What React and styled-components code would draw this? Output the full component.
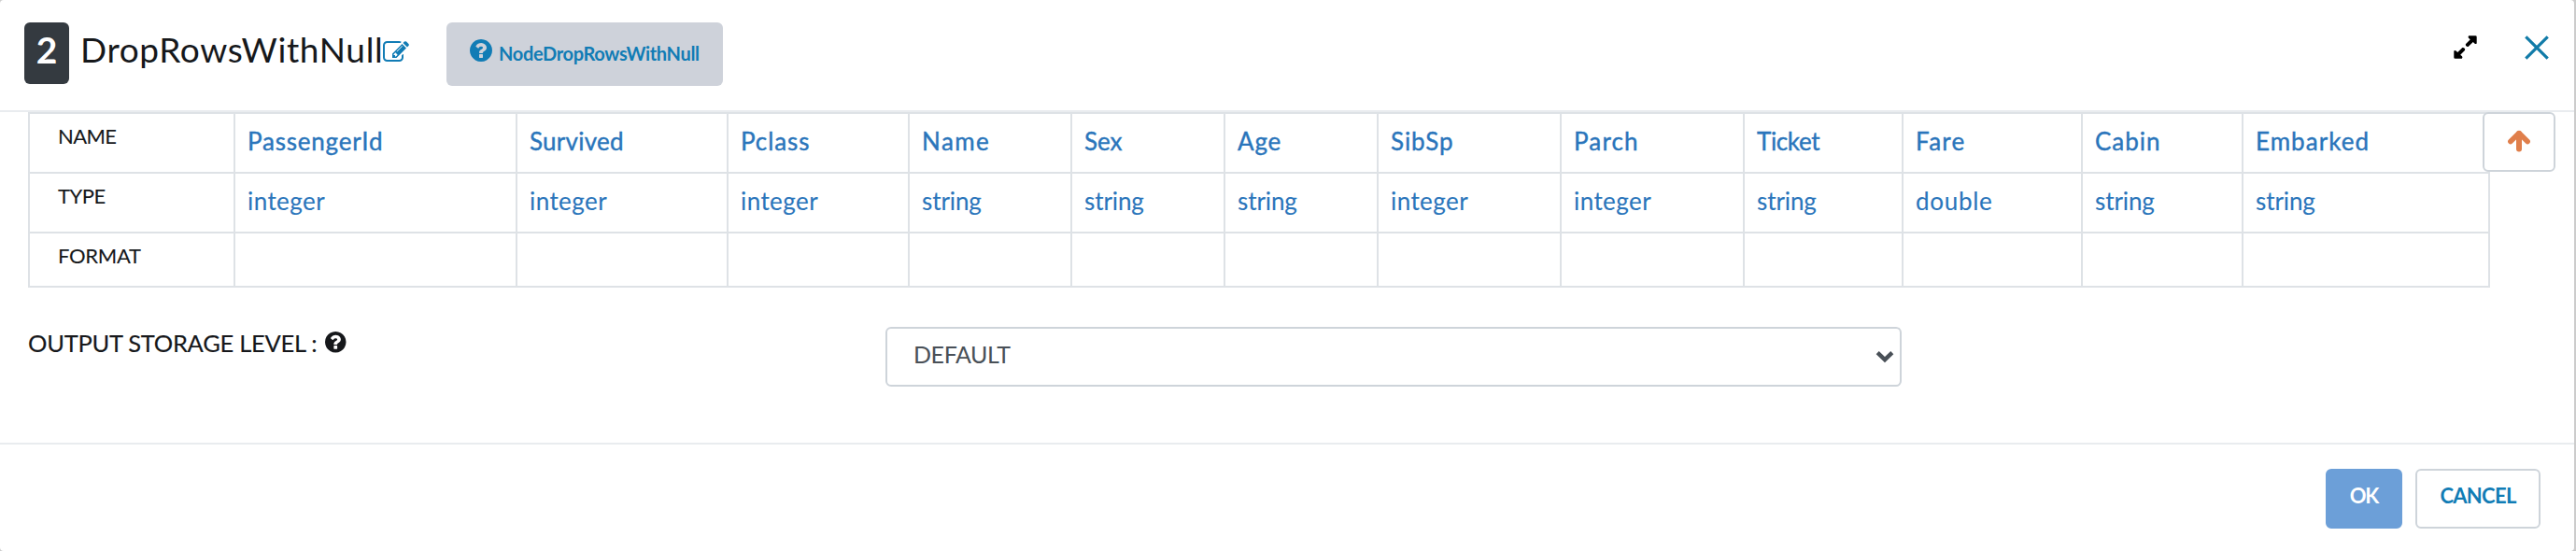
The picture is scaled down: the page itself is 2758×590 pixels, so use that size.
import React from "react";
import styled, { createGlobalStyle } from "styled-components";

const GlobalStyle = createGlobalStyle`
  * { box-sizing: border-box; }
  body {
    margin: 0;
    background: #cccccc;
    color: #16181b;
    font-family: Lato, "Liberation Sans", sans-serif;
  }
  svg { display: block; }
`;

const Modal = styled.div`
  display: flex;
  flex-direction: column;
  height: 590px;
  margin-right: 2px;
  background: #fff;
  border-radius: 4px;
`;

const Header = styled.header`
  display: flex;
  align-items: flex-start;
  height: 120px;
  padding: 24px 27px 0 26px;
  border-bottom: 2px solid #e9ecef;
`;

const StepBadge = styled.span`
  width: 48px;
  height: 66px;
  border-radius: 6px;
  background: #343a40;
  color: #fff;
  font-size: 39px;
  font-weight: 700;
  line-height: 58px;
  text-align: center;
`;

const Title = styled.h1`
  width: 324px;
  margin: 0 0 0 12px;
  font-size: 37px;
  font-weight: 400;
  line-height: 58px;
  letter-spacing: 0.64px;
  white-space: nowrap;
`;

const EditButton = styled.a`
  margin-top: 18px;
  color: #117cb5;
`;

const HelpLink = styled.a`
  display: flex;
  align-items: flex-start;
  width: 296px;
  height: 68px;
  margin-left: 40px;
  padding: 18px 0 0 25px;
  border-radius: 6px;
  background: #ced2da;
  color: #117cb5;
  font-size: 20px;
  font-weight: 700;
  line-height: 30px;
  letter-spacing: -0.33px;
  white-space: nowrap;

  span { margin-left: 7px; }
`;

const HeaderActions = styled.div`
  display: flex;
  gap: 51px;
  margin: 14px 0 0 auto;
`;

const Schema = styled.section`
  display: flex;
  align-items: flex-start;
  padding-left: 30px;
`;

const Table = styled.div`
  display: grid;
  grid-template-columns: 220px 302px 226px 194px 174px 164px 164px 196px 196px 170px 192px 172px 266px;
  grid-template-rows: 64px 64px 60px;
`;

const Cell = styled.div`
  padding: 13px 0 0 13px;
  border: 0 solid #dee2e6;
  border-top-width: 2px;
  border-left-width: 2px;
  border-right-width: ${(p) => (p.$last ? "2px" : 0)};
  border-bottom-width: ${(p) => (p.$bottom ? "2px" : 0)};
  color: #2a75bb;
  font-size: 26px;
  line-height: 32px;
  letter-spacing: ${(p) => p.$track || 0}px;
  -webkit-text-stroke: ${(p) => (p.$strong ? "0.4px" : "0.1px")} currentColor;
  white-space: nowrap;
`;

const LabelCell = styled(Cell)`
  padding: 11px 0 0 30px;
  color: #16181b;
  font-size: 22px;
  line-height: 26px;
`;

const CollapseButton = styled.button`
  display: flex;
  justify-content: center;
  width: 78px;
  height: 64px;
  margin-left: -8px;
  padding: 17px 0 0;
  border: 2px solid #ced4da;
  border-radius: 6px;
  background: #fff;
`;

const Field = styled.section`
  display: flex;
  align-items: flex-start;
  height: 166px;
  padding: 42px 0 0 30px;
`;

const FieldLabel = styled.label`
  display: flex;
  width: 918px;
  font-size: 25.5px;
  line-height: 34px;
  letter-spacing: -0.27px;
  white-space: nowrap;
  -webkit-text-stroke: 0.15px currentColor;

  svg { margin: 5px 0 0 9px; }
`;

const Select = styled.div`
  display: flex;
  justify-content: space-between;
  width: 1088px;
  height: 64px;
  padding: 12px 6px 0 28px;
  border: 2px solid #ced4da;
  border-radius: 6px;
  color: #495057;
  font-size: 25px;
  line-height: 30px;
  letter-spacing: -0.4px;

  svg { margin-top: 11px; }
`;

const Footer = styled.footer`
  display: flex;
  flex: 1;
  align-items: flex-start;
  justify-content: flex-end;
  gap: 14px;
  padding: 26px 36px 0 0;
  border-top: 2px solid #e9ecef;
`;

const Button = styled.button`
  width: ${(p) => (p.$primary ? 82 : 134)}px;
  height: 64px;
  padding: 0 0 7px;
  border: 2px solid ${(p) => (p.$primary ? "#6c9fd8" : "#ced4da")};
  border-radius: 6px;
  background: ${(p) => (p.$primary ? "#6c9fd8" : "#fff")};
  color: ${(p) => (p.$primary ? "#fff" : "#117cb5")};
  font: 700 22px/26px Lato, "Liberation Sans", sans-serif;
  letter-spacing: ${(p) => (p.$primary ? -1.2 : -0.7)}px;
`;

const columns = [
  { name: "PassengerId", track: 0.79, type: "integer" },
  { name: "Survived", track: 0.24, type: "integer" },
  { name: "Pclass", track: 0.92, type: "integer" },
  { name: "Name", track: 1.43, type: "string" },
  { name: "Sex", track: 0, type: "string" },
  { name: "Age", track: 0.8, type: "string" },
  { name: "SibSp", track: 0.93, type: "integer" },
  { name: "Parch", track: 1.15, type: "integer" },
  { name: "Ticket", track: -0.38, type: "string" },
  { name: "Fare", track: 1.27, type: "double" },
  { name: "Cabin", track: 1, type: "string" },
  { name: "Embarked", track: 1.04, type: "string" },
];

const typeTrack = { integer: 0.43, string: -0.1, double: 0.7 };

const QuestionCircle = ({ size }) => (
  <svg width={size} height={size} viewBox="128 128 1536 1536" fill="currentColor">
    <path d="M1024 1376v-192q0-14-9-23t-23-9h-192q-14 0-23 9t-9 23v192q0 14 9 23t23 9h192q14 0 23-9t9-23zm256-672q0-88-55.5-163t-138.5-116-170-41q-243 0-371 213-15 24 8 42l132 100q7 6 19 6 16 0 25-12 53-68 86-92 34-24 86-24 48 0 85.5 26t37.5 59q0 38-20 61t-68 45q-63 28-115.5 86.5t-52.5 125.5v36q0 14 9 23t23 9h192q14 0 23-9t9-23q0-19 21.5-49.5t54.5-49.5q32-18 49-28.5t46-35 44.5-48 28-60.5 12.5-81zm384 192q0 209-103 385.5t-279.5 279.5-385.5 103-385.5-103-279.5-279.5-103-385.5 103-385.5 279.5-279.5 385.5-103 385.5 103 279.5 279.5 103 385.5z" />
  </svg>
);

const EditIcon = () => (
  <svg width="28" height="28" viewBox="0 0 1792 1792" fill="currentColor">
    <path d="M888 1184l116-116-152-152-116 116v56h96v96h56zm440-720q-16-16-33 1l-350 350q-17 17-1 33t33-1l350-350q17-17 1-33zm80 594v190q0 119-84.5 203.5t-203.5 84.5h-832q-119 0-203.5-84.5t-84.5-203.5v-832q0-119 84.5-203.5t203.5-84.5h832q63 0 117 25 15 7 18 23 3 17-9 29l-49 49q-14 14-32 8-23-6-45-6h-832q-66 0-113 47t-47 113v832q0 66 47 113t113 47h832q66 0 113-47t47-113v-126q0-13 9-22l64-64q15-15 35-7t20 29zm-96-738l288 288-672 672h-288v-288zm444 132l-92 92-288-288 92-92q28-28 68-28t68 28l152 152q28 28 28 68t-28 68z" />
  </svg>
);

const ExpandIcon = () => (
  <svg width="25" height="25" viewBox="0 0 25 25">
    <path
      d="M16.2 0.3H23.4Q24.7 0.3 24.7 1.6V8.6Q23.5 9.6 22.4 8.6L20.8 7L15.6 11.9Q14.3 12.2 13.1 10.9Q12.4 9.8 13.1 9.1L17.8 4.3L16 2.7Q15 1.4 16.2 0.3ZM8.8 24.7H1.6Q0.3 24.7 0.3 23.4V16.4Q1.5 15.4 2.6 16.4L4.2 18L9.4 13.1Q10.7 12.8 11.9 14.1Q12.6 15.2 11.9 15.9L7.2 20.7L9 22.3Q10 23.6 8.8 24.7Z"
      fill="#000"
    />
  </svg>
);

const CloseIcon = () => (
  <svg width="26" height="26" viewBox="0 0 26 26" fill="none" stroke="#117ba8" strokeWidth="3.2">
    <path d="M1.3 1.3L24.7 24.7M24.7 1.3L1.3 24.7" />
  </svg>
);

const ArrowUpIcon = () => (
  <svg width="24" height="24" viewBox="0 0 24 24" fill="none" stroke="#e07f4b" strokeLinecap="round" strokeLinejoin="round">
    <path d="M12 4V20.4" strokeWidth="6" />
    <path d="M2.9 12.6L12 3.6L21.1 12.6" strokeWidth="5.6" />
  </svg>
);

const ChevronDown = () => (
  <svg width="20" height="14" viewBox="0 0 20 14" fill="none" stroke="#495057" strokeWidth="4.4">
    <path d="M2.2 2.6L10 10.1L17.8 2.6" />
  </svg>
);

export default function App() {
  return (
    <>
      <GlobalStyle />
      <Modal>
        <Header>
          <StepBadge>2</StepBadge>
          <Title>DropRowsWithNull</Title>
          <EditButton><EditIcon /></EditButton>
          <HelpLink>
            <QuestionCircle size={24} />
            <span>NodeDropRowsWithNull</span>
          </HelpLink>
          <HeaderActions>
            <ExpandIcon />
            <CloseIcon />
          </HeaderActions>
        </Header>

        <Schema>
          <Table>
            <LabelCell $track={-0.6}>NAME</LabelCell>
            {columns.map((c, i) => (
              <Cell key={c.name} $strong $track={c.track} $last={i === columns.length - 1}>{c.name}</Cell>
            ))}
            <LabelCell $track={-0.45}>TYPE</LabelCell>
            {columns.map((c, i) => (
              <Cell key={c.name} $track={typeTrack[c.type]} $last={i === columns.length - 1}>{c.type}</Cell>
            ))}
            <LabelCell $track={-0.3} $bottom>FORMAT</LabelCell>
            {columns.map((c, i) => (
              <Cell key={c.name} $bottom $last={i === columns.length - 1} />
            ))}
          </Table>
          <CollapseButton><ArrowUpIcon /></CollapseButton>
        </Schema>

        <Field>
          <FieldLabel>
            OUTPUT STORAGE LEVEL :
            <QuestionCircle size={22.5} />
          </FieldLabel>
          <Select>
            DEFAULT
            <ChevronDown />
          </Select>
        </Field>

        <Footer>
          <Button $primary>OK</Button>
          <Button>CANCEL</Button>
        </Footer>
      </Modal>
    </>
  );
}
